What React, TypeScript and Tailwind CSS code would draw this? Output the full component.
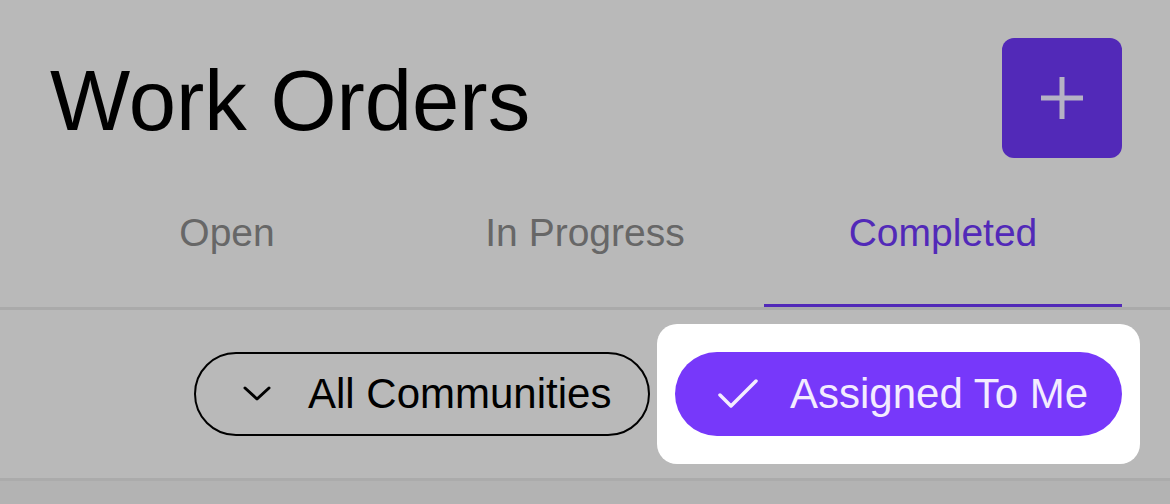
import React from "react";

export default function App() {
  const font = { fontFamily: '"Liberation Sans", Arial, sans-serif' };
  return (
    <div className="w-[1170px] h-[504px] bg-[#b9b9b9] overflow-hidden flex flex-col" style={font}>
      {/* Header */}
      <div className="flex items-center justify-between pl-[48px] pr-[48px] pt-[38px]">
        <h1 className="text-[85px] leading-none text-black ml-[2px] mt-[4px]">Work Orders</h1>
        <button className="w-[120px] h-[120px] rounded-[12px] bg-[#5229b8] flex items-center justify-center">
          <svg width="42" height="42" viewBox="0 0 42 42">
            <path d="M21 0V42M0 21H42" stroke="#b5b2c4" strokeWidth="5" />
          </svg>
        </button>
      </div>

      {/* Tabs */}
      <div className="flex px-[48px]">
        <div className="flex-1 flex justify-center h-[149px] pt-[55px] text-[39px] leading-none text-[#676767]">Open</div>
        <div className="flex-1 flex justify-center h-[149px] pt-[55px] text-[39px] leading-none text-[#676767]">In Progress</div>
        <div className="flex-1 flex justify-center h-[149px] pt-[55px] text-[39px] leading-none text-[#5229b8] border-b-[3px] border-[#5229b8]">Completed</div>
      </div>
      <div className="h-[3px] bg-[#aaaaaa]" />

      {/* Filters */}
      <div className="flex justify-end items-center gap-[25px] pr-[48px] pt-[42px] pb-[42px]">
        <button className="h-[84px] w-[456px] rounded-full border-[2.5px] border-black flex items-center pl-[47px] gap-[37px]">
          <svg width="28" height="16" viewBox="0 0 28 16">
            <path d="M2 2L14 13L26 2" stroke="#000" strokeWidth="3" fill="none" strokeLinecap="round" strokeLinejoin="round" />
          </svg>
          <span className="text-[42px] leading-none text-black">All Communities</span>
        </button>
        <div className="relative">
          <div className="absolute -left-[18px] -right-[18px] -top-[28px] -bottom-[28px] bg-white rounded-[20px]" />
          <button className="relative h-[84px] w-[447px] rounded-full bg-[#7738fa] flex items-center pl-[43px] gap-[32px]">
            <svg width="40" height="30" viewBox="0 0 40 30">
              <path d="M2 16L13 27L38 2" stroke="#f3ecff" strokeWidth="3.5" fill="none" strokeLinecap="round" strokeLinejoin="round" />
            </svg>
            <span className="text-[42px] leading-none text-[#f3ecff]">Assigned To Me</span>
          </button>
        </div>
      </div>
      <div className="h-[3px] bg-[#ababab]" />
      <div className="flex-1 bg-[#b3b3b3]" />
    </div>
  );
}
